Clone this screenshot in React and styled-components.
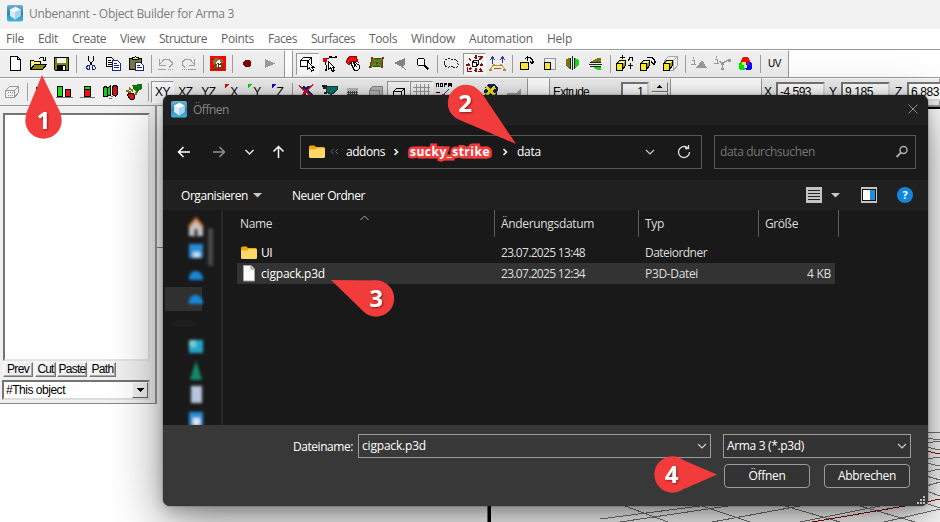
import React, { useLayoutEffect, useRef } from "react";
import styled, { createGlobalStyle, css } from "styled-components";

const Global = createGlobalStyle`
  * { box-sizing: border-box; }
  body { margin: 0; background: #fff; overflow: hidden; }
`;

const UI_FONT = `"Open Sans", "Noto Sans", sans-serif`;
const CLASSIC_FONT = `"Liberation Sans", Arial, sans-serif`;

/* ---------- text fitted to a given advance width ---------- */
const FitBox = styled.span`
  display: block;
  flex: none;
  width: ${(p) => p.$w}px;
  white-space: pre;
`;
function Fit({ w, children }) {
  const ref = useRef(null);
  useLayoutEffect(() => {
    const el = ref.current;
    el.style.letterSpacing = "0px";
    const natural = el.getBoundingClientRect().width;
    el.style.letterSpacing = `${(w - natural) / Math.max(1, children.length)}px`;
  }, [w, children]);
  return (
    <FitBox $w={w}>
      <span ref={ref}>{children}</span>
    </FitBox>
  );
}

/* ---------- main window ---------- */
const Screen = styled.div`
  position: relative;
  width: 940px;
  height: 522px;
  overflow: hidden;
  display: flex;
  flex-direction: column;
  background: #fff;
  font-family: ${UI_FONT};
  font-size: 12px;
`;
const TitleBar = styled.header`
  height: 29px;
  flex: none;
  display: flex;
  align-items: center;
  gap: 6px;
  padding: 0 0 2px 7px;
  background: #f2f2f2;
  color: #7d7d7d;
`;
const MenuBar = styled.nav`
  height: 20px;
  flex: none;
  display: flex;
  align-items: center;
  gap: 14px;
  padding: 0 0 1px 6px;
  background: #fff;
  color: #626262;
`;
const ToolRow = styled.div`
  height: 28px;
  flex: none;
  display: flex;
  border-top: 1px solid #999;
  background: #fff;
`;
const ToolBand = styled.div`
  display: flex;
  align-items: center;
  width: ${(p) => p.$w}px;
  flex: none;
  margin-left: ${(p) => p.$gap || 0}px;
  padding: 0 0 1px ${(p) => p.$pad || 0}px;
  background: #efefef;
  border-top: 1px solid #fff;
  border-right: 1px solid #999;
  border-left: ${(p) => (p.$gap ? "1px solid #999" : "0")};
`;
const ToolButton = styled.div`
  width: 23px;
  height: 22px;
  flex: none;
  display: flex;
  align-items: center;
  justify-content: center;
  color: #000;
  border: 1px solid transparent;
  ${(p) =>
    p.$pressed &&
    css`
      border-color: #9a9a9a #fff #fff #9a9a9a;
      background: #f8f8f8;
    `}
`;
const Sep = styled.div`
  width: 6px;
  height: 18px;
  flex: none;
  display: flex;
  justify-content: center;
  &::before {
    content: "";
    width: 1px;
    background: #a0a0a0;
  }
`;
const AxisText = styled.span`
  font: ${(p) => (p.$small ? 10 : 12)}px ${CLASSIC_FONT};
  letter-spacing: -0.4px;
`;
const FieldLabel = styled.span`
  width: ${(p) => p.$w}px;
  flex: none;
  font: 12px ${CLASSIC_FONT};
  color: #000;
`;
const Sunken = styled.div`
  width: ${(p) => p.$w}px;
  height: 19px;
  flex: none;
  margin-right: ${(p) => p.$mr || 0}px;
  padding: 1px 3px 0 2px;
  font: 12px ${CLASSIC_FONT};
  line-height: 15px;
  text-align: ${(p) => p.$align || "left"};
  background: #fff;
  border: 2px solid;
  border-color: #777 #ddd #ddd #777;
`;
const Spinner = styled.div`
  width: 17px;
  height: 19px;
  display: flex;
  flex-direction: column;
  div {
    flex: 1;
    display: flex;
    align-items: center;
    justify-content: center;
    background: #f0f0f0;
    border: 1px solid;
    border-color: #fff #777 #777 #fff;
  }
`;
const Workspace = styled.div`
  flex: 1;
  display: flex;
  align-items: flex-start;
  border-top: 1px solid #999;
`;
const SidePanel = styled.aside`
  width: 157px;
  height: 298px;
  flex: none;
  display: flex;
  flex-direction: column;
  padding: 7px 6px 0 2px;
  background: #f0f0f0;
  border-right: 2px solid #999;
  border-bottom: 1px solid #888;
`;
const ObjectList = styled.div`
  width: 147px;
  height: 248px;
  margin-left: 1px;
  background: #fff;
  border: 2px solid;
  border-color: #747474 #e4e4e4 #e4e4e4 #747474;
`;
const PanelButtons = styled.div`
  display: flex;
  height: 15px;
  margin: 1px 0 3px 1px;
`;
const RaisedButton = styled.div`
  width: ${(p) => p.$w}px;
  margin-right: ${(p) => p.$mr}px;
  height: 15px;
  display: flex;
  justify-content: center;
  font: 12px ${CLASSIC_FONT};
  line-height: 13px;
  background: #f0f0f0;
  border: 1px solid;
  border-color: #fff #777 #777 #fff;
  box-shadow: inset -1px -1px #aaa;
`;
const ClassicCombo = styled.div`
  width: 148px;
  height: 20px;
  display: flex;
  justify-content: space-between;
  padding-left: 2px;
  font: 12px ${CLASSIC_FONT};
  line-height: 16px;
  background: #fff;
  border: 2px solid;
  border-color: #747474 #ddd #ddd #747474;
`;
const ComboArrow = styled.div`
  width: 16px;
  height: 16px;
  display: flex;
  align-items: center;
  justify-content: center;
  background: #f0f0f0;
  border: 1px solid;
  border-color: #fff #666 #666 #fff;
`;

/* ---------- dialog ---------- */
const Dialog = styled.section`
  position: absolute;
  left: 163px;
  top: 95px;
  width: 765px;
  height: 411px;
  display: flex;
  flex-direction: column;
  overflow: hidden;
  border-radius: 7px;
  background: #191919;
  color: #fff;
`;
const DialogShadow = styled.div`
  position: absolute;
  left: 163px;
  top: 95px;
  width: 765px;
  height: 411px;
  border-radius: 7px;
  box-shadow: 0 0 2px rgba(0, 0, 0, 0.45), 0 3px 14px rgba(0, 0, 0, 0.22), 0 16px 52px rgba(0, 0, 0, 0.45);
`;
const DialogTitle = styled.div`
  height: 30px;
  flex: none;
  display: flex;
  align-items: center;
  gap: 6px;
  padding: 0 9px 2px 8px;
  background: #202020;
  color: #868686;
`;
const Spacer = styled.div`
  flex: 1;
`;
const NavBar = styled.div`
  height: 55px;
  flex: none;
  display: flex;
  align-items: center;
  padding: 0 12px 1px 12px;
`;
const NavIcons = styled.div`
  width: 125px;
  height: 18px;
`;
const AddressBox = styled.div`
  width: 402px;
  height: 34px;
  margin-right: 12px;
  display: flex;
  align-items: center;
  padding: 0 10px 1px 8px;
  border: 1px solid #555;
`;
const Slot = styled.div`
  width: ${(p) => p.$w}px;
  flex: none;
  display: flex;
  align-items: center;
  justify-content: center;
`;
const Redacted = styled.span`
  font-weight: 700;
  color: #fff;
  -webkit-text-stroke: 5px #f23c3c;
  paint-order: stroke fill;
  stroke-linejoin: round;
`;
const SearchBox = styled.div`
  width: 202px;
  height: 34px;
  display: flex;
  align-items: center;
  justify-content: space-between;
  padding: 0 6px 1px 5px;
  border: 1px solid #555;
  color: #757575;
`;
const CommandBar = styled.div`
  height: 30px;
  flex: none;
  display: flex;
  align-items: center;
  padding: 0 15px 0 18px;
  background: #202020;
`;
const Browser = styled.div`
  height: 215px;
  flex: none;
  display: flex;
`;
const Sidebar = styled.div`
  width: 60px;
  flex: none;
  border-right: 2px solid #272727;
`;
const FileList = styled.div`
  flex: 1;
  padding-left: 14px;
`;
const HeaderRow = styled.div`
  display: flex;
  height: 27px;
  margin-bottom: 5px;
`;
const HeaderCell = styled.div`
  width: ${(p) => p.$w}px;
  padding: ${(p) => p.$pad || "5px 0 0 6px"};
  flex: none;
  display: flex;
  color: #dedede;
  border-right: 1px solid #5e5e5e;
`;
const FileRow = styled.div`
  display: flex;
  align-items: center;
  width: 598px;
  height: 21px;
  background: ${(p) => (p.$selected ? "#333" : "transparent")};
`;
const FileCell = styled.div`
  width: ${(p) => p.$w}px;
  flex: none;
  display: flex;
  align-items: center;
  padding-left: ${(p) => p.$pl ?? 6}px;
  gap: 4px;
  color: ${(p) => (p.$bright ? "#fff" : "#dedede")};
`;
const Footer = styled.div`
  flex: 1;
  background: #383838;
  display: flex;
  flex-direction: column;
  gap: 6px;
  padding: 9px 17px 0 130px;
`;
const FooterRow = styled.div`
  display: flex;
  align-items: center;
`;
const DarkField = styled.div`
  width: ${(p) => p.$w}px;
  height: 24px;
  flex: none;
  display: flex;
  align-items: center;
  justify-content: space-between;
  margin-left: ${(p) => p.$ml}px;
  padding: 0 3px 1px 3px;
  border: 1px solid #9b9b9b;
  background: ${(p) => p.$bg};
`;
const DarkButton = styled.div`
  width: 86px;
  height: 24px;
  display: flex;
  align-items: center;
  justify-content: center;
  margin: 0 ${(p) => p.$mr}px 0 0;
  padding-bottom: 1px;
  border: 1px solid #9b9b9b;
  border-radius: 4px;
  background: #333;
`;
const Overlay = styled.svg`
  position: absolute;
  left: 0;
  top: 0;
  width: 940px;
  height: 522px;
  pointer-events: none;
`;
const Grip = styled.svg`
  position: absolute;
  right: 3px;
  bottom: 2px;
`;

/* ---------- icons ---------- */
const S = ({ children, w = 17, h = 17, crisp = true, vb }) => (
  <svg width={w} height={h} viewBox={vb || `0 0 ${w} ${h}`} fill="none" shapeRendering={crisp ? "crispEdges" : "auto"}>
    {children}
  </svg>
);
const AppIcon = () => (
  <S w={16} h={17} crisp={false}>
    <defs>
      <linearGradient id="appbg" x1="0" y1="0" x2="0" y2="1">
        <stop offset="0" stopColor="#6fb0d6" />
        <stop offset=".5" stopColor="#2d86ba" />
        <stop offset="1" stopColor="#43b6e0" />
      </linearGradient>
    </defs>
    <rect width="16" height="16.5" rx="2" fill="url(#appbg)" />
    <path d="M3 4.5 8.5 2 13.5 4.5V11L8 14.5 3 11Z" fill="#d5ecf7" />
    <path d="M3 4.5 8.5 2l5 2.5L8 7Z" fill="#fff" />
    <path d="M8 7l5.5-2.5V11L8 14.5Z" fill="#a9d3ea" />
  </S>
);
const YellowBox = ({ x = 1, y = 8 }) => (
  <g>
    <path d={`M${x + 0.5} ${y + 0.5}l3-3h6v5l-3 4h-6z`} fill="#a8a000" stroke="#000" />
    <path d={`M${x + 2} ${y}l2-2h5l-2 2z`} fill="#ffff70" />
    <rect x={x + 0.5} y={y + 0.5} width="6" height="7" fill="#ffeb2a" stroke="#000" />
  </g>
);
const I = {
  new: <path d="M3.5 1.5h7l3 3v11h-10zM10.5 1.5v3h3" stroke="#000" fill="#fff" />,
  open: (
    <>
      <path d="M.5 14.500v-9h3l1 1h6v3" stroke="#000" fill="#fff27a" />
      <path d="M.5 14.500l4-5h12l-4 5z" stroke="#000" fill="#8a8a00" />
      <path d="M9 3.500l2-1h2l1 2M15.500 2v3h-3" stroke="#000" />
    </>
  ),
  save: (
    <>
      <path d="M1.500 2.500h14v13h-13l-1-1z" stroke="#000" fill="#838300" />
      <path d="M4 3h9v5H4z" fill="#f3f3f3" />
      <path d="M4 10h9v6H4z" fill="#000" />
      <path d="M10 11h2v4h-2z" fill="#fff" />
    </>
  ),
  cut: (
    <>
      <path d="M6.500 1v4l4 6M11.500 1v4l-4 6" stroke="#000" />
      <path d="M5.500 10.500h2v4h-2l-1-2zM10.500 10.500h2l1 3-1 1h-2z" stroke="#1c2580" />
    </>
  ),
  copy: (
    <>
      <path d="M1.500 2.500h5l3 3v6h-8z" stroke="#000" fill="#fff" />
      <path d="M3 5.500h3M3 7.500h4M3 9.500h4" stroke="#000" />
      <path d="M7.500 5.500h5l3 3v7h-8z" stroke="#1c2580" fill="#fff" />
      <path d="M9 8.500h3M9 10.500h5M9 12.500h5" stroke="#1c2580" />
    </>
  ),
  paste: (
    <>
      <path d="M1.500 3.500h12v11h-12z" stroke="#000" fill="#77773c" />
      <path d="M4.500 4.500v-2h2l1-1 1 1h2v2z" stroke="#000" fill="#ffef55" />
      <path d="M7.500 7.500h5l3 3v5h-8z" stroke="#1c2580" fill="#fff" />
      <path d="M9 10.500h3M9 12.500h5" stroke="#1c2580" />
    </>
  ),
  undo: <path d="M2.500 4v6h6M3 9l4-4.500h5l3 3v2l-3 3M1 14.500h8M11 14.500h1M13 14.500h1M15 14.500h1" stroke="#a2a2a2" />,
  redo: <path d="M14.500 4v6h-6M14 9l-4-4.500h-5l-3 3v2l3 3M16 14.500h-8M6 14.500h1M4 14.500h1M2 14.500h1" stroke="#a2a2a2" />,
  red: (
    <>
      <rect x="1" y="1" width="16" height="15" fill="#f30c08" />
      <path d="M4 5.500l3-3 3 2 3-1 1 3-2 5H5z" fill="#84763b" />
      <path d="M7 8l3-4 3 5-1 3H8z" fill="#fff" />
      <path d="M3 14.500h12M4 13l3-4M10 13l-1-5M14 13l-2-5" stroke="#59410e" strokeWidth="1.5" />
      <path d="M3 4.500h2M9 9.500h3" stroke="#333" />
    </>
  ),
  rec: <path d="M7 5h4l2 2v3l-2 2H7L5 10V7z" fill="#800000" />,
  play: <path d="M4 4l10 4.500L4 13z" fill="#9c9c9c" />,
  select: (
    <>
      <path d="M1.500 5.500l3-3h8v6l-3 3h-8zM1.500 5.500h8v6M9.500 5.500l3-3" stroke="#000" fill="#fff" />
      <path d="M8.500 7v7l2-1 2 3 2-1-2-3h2z" stroke="#000" fill="#fff" />
    </>
  ),
  points: (
    <>
      <path d="M4 4.500l4-2h6M3.500 5l1 9" stroke="#000" />
      <path d="M1 3h4v4H1z" fill="#e00" />
      <path d="M7 1h3v2H7zM13 1h2v2h-2zM3 14h2v2H3z" fill="#000" />
      <path d="M6.500 6.500v8l2-2 2 4 2-1-2-3h2z" stroke="#000" fill="#fff" />
    </>
  ),
  faces: (
    <>
      <path d="M1 7l3-5 7-1 2 6-6-1-3 4z" fill="#ef1111" stroke="#900" />
      <path d="M5.500 7.500l3-1 6 4v3l-2 2h-3zM7 6l5 6M9 12l3-4" stroke="#000" fill="#fff" />
    </>
  ),
  surf: (
    <>
      <path d="M4 3h11l-1 9-12-1z" fill="#79601f" stroke="#4c4613" />
      <path d="M4 3l10 9M15 3L3 12" stroke="#18b318" strokeWidth="1.5" />
      <path d="M3 2h2v2H3zM14 2h2v2h-2zM8 7h2v2H8zM13 11h2v2h-2zM1 11h2v2H1z" fill="#b91600" />
    </>
  ),
  tri: <path d="M3 8l11-5v7l-3 1 4 4-6-4z" fill="#858585" />,
  zoom: (
    <>
      <circle cx="7" cy="7" r="4" stroke="#000" fill="#fff" />
      <path d="M10 10l4.500 4.500" stroke="#000" strokeWidth="2" />
    </>
  ),
  lasso: <path d="M1.500 8c0-4 4-5 6-4s5-2 7 3-2 7-5 5-3 1-5 0-3-1-3-4z" stroke="#222" strokeDasharray="2 1" />,
  move: (
    <>
      <path d="M6 7.500l2-2h4v4l-2 2H6zM6 7.500h4v4" stroke="#111" />
      <path d="M9.500 0v4M9.500 13v4M0 9.500h4M14 9.500h3M3 3.500l2 2M13 5l3-3M3 15l2-2M14 14l2 2" stroke="#8a1010" strokeWidth="2" />
      <path d="M8 2.500h3M2 8v3M15.500 8v3M8 15h3M12 1.500h5v4M1.500 12v4h4M12 16h5v-3" stroke="#8a1010" />
    </>
  ),
  arrows: (
    <>
      <path d="M3.500 9V3M13.500 8V3M1 5l2.500-3L6 5M11 5l2.500-3L16 5" stroke="#2738a8" />
      <path d="M1 14.500l3-4h9l3 4" stroke="#cc8a20" />
      <path d="M0 14h3v2H0zM4 9h2v2H4zM11 9h2v2h-2zM14 14h3v2h-3z" fill="#a2a020" />
      <path d="M5 13h7" stroke="#c41" />
    </>
  ),
  rot: (
    <>
      <rect x="2.5" y="7.500" width="8" height="7" fill="#ffe83a" stroke="#000" />
      <path d="M7 3.500l2-1h3l2 2v4M12 6.500l2 2 2-2M9.500 1v5" stroke="#000" />
    </>
  ),
  scale: (
    <>
      <path d="M3.500 3.500h11v11h-11z" stroke="#999" />
      <rect x="3.500" y="7.500" width="6" height="7" fill="#ffe83a" stroke="#000" />
    </>
  ),
  flipH: (
    <>
      <path d="M6 3v11L2 11V4z" fill="#77760f" />
      <path d="M11 3v11l4-5V5z" fill="#12dd12" />
      <path d="M6.500 3v11M8.500 1v14M10.500 3v11" stroke="#222" />
    </>
  ),
  flipV: (
    <>
      <path d="M3 7l8-4h3v4z" fill="#77760f" />
      <path d="M4 11h10v4h-3z" fill="#12dd12" />
      <path d="M3 7.500h11M2 9.500h13M3 11.500h11" stroke="#222" />
    </>
  ),
  boxMove: (
    <>
      <YellowBox x={0} />
      <path d="M6.500 0v4M4 2.500h5M12 6l3-4M13 2.500h3v3M12 10.500h5M14.500 8v6" stroke="#000" />
    </>
  ),
  boxRot: (
    <>
      <YellowBox x={1} />
      <path d="M8 2.500h5l2 2v4M12 6.500l3 3 2-3" stroke="#000" />
    </>
  ),
  boxScale: (
    <>
      <path d="M2.500 5.500l4-4h9v9l-4 5h-9zM2.500 5.500h9v9M11.500 5.500l4-4" stroke="#aaa" />
      <YellowBox x={1} />
    </>
  ),
  infoTri: (
    <>
      <path d="M5 13l6-8 5 8z" fill="#999" />
      <path d="M1 5.500h2v4M0 9.500h5M2.500 2v2" stroke="#999" />
    </>
  ),
  infoPts: (
    <>
      <path d="M8.500 14V8l6-3M8 8L5 6" stroke="#999" />
      <path d="M7 7h3v3H7zM14 4h3v3h-3zM7 13h3v2H7z" fill="#999" />
      <path d="M1 4.500h2v4M0 8.500h5M2.500 1v2" stroke="#999" />
    </>
  ),
  rgb: (
    <>
      <circle cx="8.500" cy="6" r="4.200" fill="#fb0505" />
      <circle cx="5.500" cy="11" r="4" fill="#04e604" />
      <circle cx="11.500" cy="11" r="4" fill="#0a0aff" />
      <path d="M5 7h4v3H5z" fill="#f7f130" />
      <path d="M10 7h2v3h-2z" fill="#a010a0" />
      <path d="M7 10h3v3H7z" fill="#bff" />
    </>
  ),
  wire: (
    <>
      <path d="M1.500 7.500l4-4h9v6l-4 5h-9zM1.500 7.500h9v6M10.500 7.500l4-4" stroke="#9a9a9a" />
      <path d="M4 9.500h5M4 12.500h5" stroke="#9a9a9a" strokeDasharray="1 1" />
    </>
  ),
  green1: <path d="M3.500 4.500h5v9h-5z" fill="#13d42a" stroke="#000" />,
  gr: (
    <>
      <path d="M1.500 3.500h5v10h-5z" fill="#14e01d" stroke="#000" />
      <path d="M9.500 6.500h5v7h-5z" fill="#ef1010" stroke="#000" />
      <path d="M0 14.500h17" stroke="#777" />
    </>
  ),
  stack: (
    <>
      <path d="M5.500 3.500h6v10h-6z" fill="#ef1010" stroke="#000" />
      <path d="M6 4h5v2H6z" fill="#14e01d" />
      <path d="M6 6.500h5" stroke="#000" />
      <path d="M1 14.500h15" stroke="#777" />
    </>
  ),
  cyls: (
    <>
      <path d="M1.500 4.500l2-1 2 1v9h-4zM5.500 5l3-2v9l-3 1z" fill="#14c81d" stroke="#000" />
      <path d="M10.500 4.500l1-2h3l1 2v7l-2 2-3-2z" fill="#d11010" stroke="#000" />
      <path d="M9 13.500h2M7 15.500h3" stroke="#777" />
    </>
  ),
  leaf: (
    <>
      <path d="M7 2l10-1v5l-3 1-1 3-4-3z" fill="#107510" />
      <path d="M2 12l3-2h3l2 3-1 3H5z" fill="#e31414" stroke="#000" />
      <path d="M1 8l5 1M10 12l2-3M4 5l4 3" stroke="#807010" strokeWidth="2" />
    </>
  ),
  xcut: (
    <>
      <path d="M5 4l9 9M11 3L5 13" stroke="#16257f" strokeWidth="3" />
      <path d="M1 3l15 12M15 2L2 14" stroke="#d11" strokeWidth="1.500" />
    </>
  ),
  teal: (
    <>
      <path d="M6 3h10v4l-6 5-5-4z" fill="#087777" stroke="#233" />
      <path d="M1 3h5M2 5h4M3 10h3" stroke="#222" strokeWidth="1.500" />
    </>
  ),
  dither: (
    <>
      <path d="M3 5h11v3H3z" fill="#bbb" />
      <path d="M3 8h11v7H3z" fill="#444" />
      <path d="M3 8.500h11M3 10.500h11M3 12.500h11" stroke="#ddd" strokeDasharray="1 1" />
    </>
  ),
  grayBox: <path d="M2.500 7.500l3-4h10v8l-3 4h-10zM2.500 7.500h10v7" fill="#bbb" stroke="#888" />,
  boxBlack: <path d="M3.500 8.500l3-3h8v7M3.500 14V8.500h8V14M11.500 8.500l3-3" stroke="#000" />,
  grid: <path d="M0 4.500h17M0 8.500h17M0 12.500h17M3.500 1v15M7.500 1v15M11.500 1v15M15.500 1v15" stroke="#999" />,
  norm: (
    <>
      <path d="M.5 4V.5h2V4M4.500.5h2v3h-2zM8.500 4V.5h2v1h-2M12.500 4V.5h1V2h1V.5h1V4" stroke="#000" />
      <path d="M8 11l5-5" stroke="#2038e8" />
      <path d="M6 11h3v3H6z" fill="#e00" />
      <path d="M0 9.500h4" stroke="#000" />
    </>
  ),
  gray: <path d="M3 6l4-3h8v10H3z" fill="#aaa" />,
  gear: (
    <>
      <path d="M4 3l3-2h5l4 4-1 6-4 4-6-1-3-5z" fill="#18205e" />
      <path d="M4 4l9 8M13 4l-9 8" stroke="#f3ed17" strokeWidth="3" />
    </>
  ),
  block: <path d="M2 10h9l5-4v10H2z" fill="#a0a0a0" />,
};

const RowOneA = ["new", "open", "save", "|", "cut", "copy", "paste", "|", "undo", "redo", "|", "red", "|", "rec", "play"];
const RowOneB = ["*select", "points", "faces", "surf", "tri", "zoom", "|", "lasso", "*move", "arrows", "|", "rot", "scale", "flipH", "flipV", "|", "boxMove", "boxRot", "boxScale", "|", "infoTri", "infoPts", "rgb", "|", "UV"];
const RowTwo = ["wire", "|", "green1", "gr", "stack", "cyls", "leaf", "|", "*XY", "XZ", "YZ", "X#e00", "Y#0d0", "Z#00e", "|", "xcut", "teal", "dither", "grayBox", "*boxBlack", "*grid", "norm", "gray", "gear", "block"];

function Tools({ items }) {
  return items.map((raw, i) => {
    if (raw === "|") return <Sep key={i} />;
    const pressed = raw[0] === "*";
    const name = pressed ? raw.slice(1) : raw;
    if (I[name]) {
      return (
        <ToolButton key={i} $pressed={pressed}>
          <S>{I[name]}</S>
        </ToolButton>
      );
    }
    const [label, color] = name.split("#");
    return (
      <ToolButton key={i} $pressed={pressed}>
        {color && (
          <S w={5} h={15}>
            <path d="M0 0h4L0 4z" fill={`#${color}`} />
          </S>
        )}
        <AxisText $small={label === "UV"}>{label}</AxisText>
      </ToolButton>
    );
  });
}

const FolderIcon = () => (
  <S w={16} h={14} crisp={false}>
    <path d="M0 2Q0 .5 1.500 .5h4L7 2h7.500Q16 2 16 3.500V12H0z" fill="#f0a900" />
    <path d="M0 4.500h6L8 3h6.500Q16 3 16 4.500v7q0 1.500-1.500 1.500h-13Q0 13 0 11.500z" fill="#ffd767" />
  </S>
);
const DocIcon = () => (
  <S w={16} h={17} crisp={false}>
    <path d="M2.500 .5H10L13.500 4v12h-11z" fill="#fafafa" stroke="#a5a5a5" />
    <path d="M10 .5V4h3.500" stroke="#888" fill="#ddd" />
  </S>
);
const Chevron = ({ c = "#ccc" }) => (
  <S w={10} h={10} crisp={false}>
    <path d="M1 3l4 4 4-4" stroke={c} strokeWidth="1.200" />
  </S>
);
const Crumb = () => (
  <S w={8} h={10} crisp={false}>
    <path d="M2.500 2.200L5.500 5 2.500 7.800" stroke="#eee" strokeWidth="1.600" />
  </S>
);
const Caret = () => (
  <S w={9} h={5} crisp={false}>
    <path d="M0 0h9L4.500 4.500z" fill="#c8c8c8" />
  </S>
);

const menus = [
  ["File", 18], ["Edit", 20], ["Create", 34], ["View", 25], ["Structure", 48], ["Points", 33],
  ["Faces", 29], ["Surfaces", 44], ["Tools", 28], ["Window", 44], ["Automation", 64], ["Help", 25],
];
const callouts = [
  { n: "1", x: 43.5, y: 120.5, tip: "M42 75L61 114L26 114Z", tx: 43.5 },
  { n: "2", x: 466, y: 103, tip: "M516 144L461 120.500L481 92Z", tx: 465 },
  { n: "3", x: 376, y: 298.5, tip: "M331 280L376 280.500L362 310Z", tx: 376 },
  { n: "4", x: 672.5, y: 474.5, tip: "M717 474.500L684 460.500L684 489Z", tx: 671.5 },
];

function ViewportLines() {
  return (
    <Overlay shapeRendering="crispEdges" fill="none">
      <g stroke="#777">
        <path d="M600 519L700 506M620 522L728 506M712 522L800 506M800 522L880 506M884 522L940 509" />
        <path d="M625 506L668 522M702 506L750 522M785 506L840 522M860 506L915 522M922 502L940 508" />
        <path d="M926 433L940 432M926 438L940 440M926 443L940 441M926 447L940 450M926 459L940 457M926 463L940 466M926 472L940 469M926 476L940 480M926 486L940 482M926 491L940 496" />
      </g>
      <path d="M926 451L940 454M812 522L905 506M926 502L940 499" stroke="#8b1010" />
      <path d="M489.500 506V522" stroke="#000" strokeWidth="3" />
      <path d="M487.500 506V522" stroke="#777" />
      <path d="M928 108H940" stroke="#000" strokeWidth="2" />
      <path d="M157 247.500h6M928 106.500h12" stroke="#888" />
    </Overlay>
  );
}

export default function App() {
  return (
    <>
      <Global />
      <Screen>
        <TitleBar>
          <AppIcon />
          <Fit w={205}>Unbenannt - Object Builder for Arma 3</Fit>
        </TitleBar>
        <MenuBar>
          {menus.map(([t, w]) => (
            <Fit key={t} w={w}>{t}</Fit>
          ))}
        </MenuBar>
        <ToolRow>
          <ToolBand $w={285} $pad={4}><Tools items={RowOneA} /></ToolBand>
          <ToolBand $w={497} $gap={7} $pad={3}><Tools items={RowOneB} /></ToolBand>
        </ToolRow>
        <ToolRow>
          <ToolBand $w={528} $pad={1}><Tools items={RowTwo} /></ToolBand>
          <ToolBand $w={122} $gap={21} $pad={3}>
            <FieldLabel $w={68}><Fit w={36}>Extrude</Fit></FieldLabel>
            <Sunken $w={28} $mr={2} $align="right">1</Sunken>
            <Spinner>
              <div><S w={5} h={3}><path d="M0 3L2.500 0 5 3z" fill="#000" /></S></div>
              <div />
            </Spinner>
          </ToolBand>
          <ToolBand $w={179} $gap={90} $pad={2}>
            <FieldLabel $w={12}>X</FieldLabel>
            <Sunken $w={49} $mr={4}><Fit w={31}>-4.593</Fit></Sunken>
            <FieldLabel $w={12}>Y</FieldLabel>
            <Sunken $w={49} $mr={5}><Fit w={28}>9.185</Fit></Sunken>
            <FieldLabel $w={12}>Z</FieldLabel>
            <Sunken $w={49}><Fit w={28}>6.883</Fit></Sunken>
          </ToolBand>
        </ToolRow>
        <Workspace>
          <SidePanel>
            <ObjectList />
            <PanelButtons>
              <RaisedButton $w={30} $mr={2}><Fit w={22}>Prev</Fit></RaisedButton>
              <RaisedButton $w={21} $mr={1}><Fit w={16}>Cut</Fit></RaisedButton>
              <RaisedButton $w={30} $mr={2}><Fit w={27}>Paste</Fit></RaisedButton>
              <RaisedButton $w={27} $mr={0}><Fit w={22}>Path</Fit></RaisedButton>
            </PanelButtons>
            <ClassicCombo>
              <Fit w={59}>#This object</Fit>
              <ComboArrow><S w={7} h={4}><path d="M0 0h7L3.500 4z" fill="#000" /></S></ComboArrow>
            </ClassicCombo>
          </SidePanel>
        </Workspace>

        <ViewportLines />
        <DialogShadow />
        <Dialog>
          <DialogTitle>
            <AppIcon />
            <Fit w={36}>Öffnen</Fit>
            <Spacer />
            <S w={12} h={12} crisp={false}><path d="M1.500 1.500l9 9M10.500 1.500l-9 9" stroke="#8a8a8a" /></S>
          </DialogTitle>
          <NavBar>
            <NavIcons>
              <S w={120} h={18} crisp={false}>
                <path d="M3.500 9H15M8.500 4l-5 5 5 5" stroke="#fff" strokeWidth="1.500" />
                <path d="M49.500 9H38M44.500 4l5 5-5 5" stroke="#8e8e8e" strokeWidth="1.500" />
                <path d="M70.500 7l4 4 4-4" stroke="#e0e0e0" strokeWidth="1.500" />
                <path d="M103.500 3.500V15M98.500 8.500l5-5 5 5" stroke="#fff" strokeWidth="1.500" />
              </S>
            </NavIcons>
            <AddressBox>
              <FolderIcon />
              <Slot $w={21}>
                <S w={12} h={8} crisp={false}><path d="M3.500 1L1 3.500 3.500 6M8 1L5.500 3.500 8 6" stroke="#686868" /></S>
              </Slot>
              <Fit w={39}>addons</Fit>
              <Slot $w={22}><Crumb /></Slot>
              <Slot $w={3} />
              <Redacted><Fit w={80}>sucky_strike</Fit></Redacted>
              <Slot $w={3} />
              <Slot $w={24}><Crumb /></Slot>
              <Fit w={24}>data</Fit>
              <Spacer />
              <Chevron />
              <Slot $w={22} />
              <S w={14} h={14} crisp={false}>
                <path d="M12.500 7A5.500 5.500 0 1 1 10.500 2.800M8 3.500h3.500V0" stroke="#ddd" strokeWidth="1.300" />
              </S>
            </AddressBox>
            <SearchBox>
              <Fit w={95}>data durchsuchen</Fit>
              <S w={14} h={14} crisp={false}>
                <circle cx="8.500" cy="5" r="3.500" stroke="#aaa" strokeWidth="1.500" />
                <path d="M6 7.500L1.500 12" stroke="#aaa" strokeWidth="1.800" />
              </S>
            </SearchBox>
          </NavBar>
          <CommandBar>
            <Fit w={67}>Organisieren</Fit>
            <Slot $w={18}><Caret /></Slot>
            <Slot $w={26} />
            <Fit w={73}>Neuer Ordner</Fit>
            <Spacer />
            <S w={16} h={16}>
              <rect width="16" height="16" rx="1" fill="#c4c4c4" />
              <path d="M2 3.500h12M2 6.500h12M2 9.500h12M2 12.500h12" stroke="#222" />
            </S>
            <Slot $w={26}><Caret /></Slot>
            <Slot $w={13} />
            <S w={16} h={16}>
              <rect width="16" height="16" rx="1" fill="#c4c4c4" />
              <rect x="1" y="2" width="14" height="12" fill="#111" />
              <rect x="2" y="3" width="7" height="10" fill="#fff" />
              <rect x="9" y="3" width="5" height="10" fill="#1b8fe0" />
            </S>
            <Slot $w={20} />
            <S w={16} h={16} crisp={false}>
              <circle cx="8" cy="8" r="8" fill="#1187da" />
              <text x="8" y="12.300" textAnchor="middle" fontFamily="Open Sans" fontWeight="700" fontSize="11" fill="#fff">?</text>
            </S>
          </CommandBar>
          <Browser>
            <Sidebar>
              <svg width="58" height="216" viewBox="0 0 58 216">
                <defs>
                  <filter id="soft" x="-40%" y="-40%" width="180%" height="180%">
                    <feGaussianBlur stdDeviation="1.700" />
                  </filter>
                </defs>
                <path d="M2 77h37v24H2z" fill="#303030" />
                <g filter="url(#soft)">
                  <rect x="45" y="18" width="5" height="38" rx="2" fill="#4a4a4a" />
                  <path d="M26 18l7-8 7 8v8H26z" fill="#c3c3c3" />
                  <path d="M26 17l7-8 7 8" fill="none" stroke="#d87e2a" strokeWidth="2.500" />
                  <path d="M31 19h4v8h-4z" fill="#303030" />
                  <rect x="26" y="34" width="14" height="14" fill="#258cd6" />
                  <path d="M30 42h7v6h-7z" fill="#b9dcf5" />
                  <path d="M26 67q2-7 7-6 7 1 7 9H28q-3 0-2-3z" fill="#1687d8" />
                  <path d="M26 91q2-7 7-6 7 1 7 9H28q-3 0-2-3z" fill="#1687d8" />
                  <rect x="10" y="112" width="22" height="3" fill="#222" />
                  <rect x="26" y="130" width="14" height="13" fill="#27a4c8" />
                  <path d="M26 130h7v7h-7z" fill="#70cfd4" />
                  <path d="M33 151l3 9 3 10H27l3-10z" fill="#16876a" />
                  <rect x="28" y="176" width="11" height="17" fill="#b8c6dc" />
                  <rect x="26" y="202" width="14" height="14" fill="#258cd6" />
                  <rect x="30" y="208" width="7" height="8" fill="#d8e8f5" />
                </g>
              </svg>
            </Sidebar>
            <FileList>
              <HeaderRow>
                <HeaderCell $w={258} $pad="5px 0 0 3px">
                  <Fit w={32}>Name</Fit>
                  <Slot $w={88} />
                  <S w={9} h={6} crisp={false} vb="0 4 9 6"><path d="M.5 9L4.500 5l4 4" stroke="#aaa" /></S>
                </HeaderCell>
                <HeaderCell $w={144}><Fit w={93}>Änderungsdatum</Fit></HeaderCell>
                <HeaderCell $w={120}><Fit w={19}>Typ</Fit></HeaderCell>
                <HeaderCell $w={80}><Fit w={33}>Größe</Fit></HeaderCell>
              </HeaderRow>
              <FileRow>
                <FileCell $w={258} $pl={4} $bright><FolderIcon /><Fit w={11}>UI</Fit></FileCell>
                <FileCell $w={144}><Fit w={84}>23.07.2025 13:48</Fit></FileCell>
                <FileCell $w={120}><Fit w={62}>Dateiordner</Fit></FileCell>
              </FileRow>
              <FileRow $selected>
                <FileCell $w={258} $pl={4} $bright><DocIcon /><Fit w={64}>cigpack.p3d</Fit></FileCell>
                <FileCell $w={144}><Fit w={84}>23.07.2025 12:34</Fit></FileCell>
                <FileCell $w={120}><Fit w={53}>P3D-Datei</Fit></FileCell>
                <FileCell $w={76} $pl={48}><Fit w={24}>4 KB</Fit></FileCell>
              </FileRow>
            </FileList>
          </Browser>
          <Footer>
            <FooterRow>
              <Fit w={60}>Dateiname:</Fit>
              <DarkField $w={353} $ml={5} $bg="#383838">
                <Fit w={64}>cigpack.p3d</Fit><Chevron />
              </DarkField>
              <DarkField $w={188} $ml={12} $bg="#333">
                <Fit w={77}>Arma 3 (*.p3d)</Fit><Chevron />
              </DarkField>
            </FooterRow>
            <FooterRow>
              <Spacer />
              <DarkButton $mr={14}><Fit w={37}>Öffnen</Fit></DarkButton>
              <DarkButton $mr={1}><Fit w={58}>Abbrechen</Fit></DarkButton>
            </FooterRow>
          </Footer>
          <Grip width="8" height="8" shapeRendering="crispEdges">
            <path d="M6 0h2v2H6zM3 3h2v2H3zM6 3h2v2H6zM0 6h2v2H0zM3 6h2v2H3zM6 6h2v2H6z" fill="#bbb" />
          </Grip>
        </Dialog>

        <Overlay>
          <defs>
            <filter id="digit" x="-30%" y="-30%" width="160%" height="160%">
              <feDropShadow dx="1" dy="1" stdDeviation=".8" floodColor="#400" floodOpacity=".6" />
            </filter>
          </defs>
          {callouts.map((c) => (
            <g key={c.n}>
              <path d={c.tip} fill="#f23c3c" />
              <circle cx={c.x} cy={c.y} r="18.200" fill="#f23c3c" />
              <text x={c.tx} y={c.y + 8.5} textAnchor="middle" fontFamily="Open Sans" fontWeight="700" fontSize="24" fill="#fff" filter="url(#digit)">
                {c.n}
              </text>
            </g>
          ))}
        </Overlay>
      </Screen>
    </>
  );
}
